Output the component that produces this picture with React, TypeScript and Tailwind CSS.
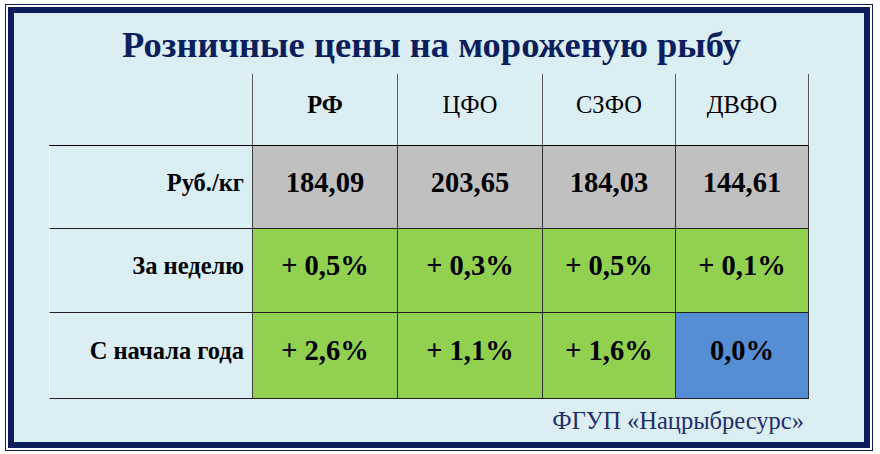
import React from 'react';

const cols = ['РФ', 'ЦФО', 'СЗФО', 'ДВФО'];

const rows = [
  { label: 'Руб./кг', cells: ['184,09', '203,65', '184,03', '144,61'], bg: ['bg-[#c0c0c0]', 'bg-[#c0c0c0]', 'bg-[#c0c0c0]', 'bg-[#c0c0c0]'], h: 'h-[83px]' },
  { label: 'За неделю', cells: ['+ 0,5%', '+ 0,3%', '+ 0,5%', '+ 0,1%'], bg: ['bg-[#92d050]', 'bg-[#92d050]', 'bg-[#92d050]', 'bg-[#92d050]'], h: 'h-[84px]' },
  { label: 'С начала года', cells: ['+ 2,6%', '+ 1,1%', '+ 1,6%', '0,0%'], bg: ['bg-[#92d050]', 'bg-[#92d050]', 'bg-[#92d050]', 'bg-[#558ed5]'], h: 'h-[86px]' },
];

export default function App() {
  return (
    <div className="w-[880px] h-[454px] bg-white pl-[5px] pt-[4px]" style={{ fontFamily: '"Liberation Serif", "Times New Roman", serif' }}>
      <div className="w-[868px] h-[447px] border border-[#0c1c5c] p-[2px] bg-white">
        <div className="w-full h-full border-[6px] border-[#0c1c5c] bg-[#dbeef4] flex flex-col">
          {/* title */}
          <h1 className="h-[61px] flex items-center justify-center pt-[4px] pr-[15px] text-[36.5px] font-bold text-[#0b1f5e] leading-none">
            Розничные цены на мороженую рыбу
          </h1>

          {/* table */}
          <div className="ml-[35px] grid grid-cols-[204px_145px_145px_133px_133px] text-black">
            <div className="h-[72px] border-r border-r-[#595959] border-b border-b-black" />
            {cols.map((c, i) => (
              <div
                key={c}
                className={`h-[72px] flex items-center justify-center pb-[9px] border-r border-r-[#595959] border-b border-b-black text-[24.5px] ${i === 0 ? 'font-bold' : ''}`}
              >
                {c}
              </div>
            ))}

            {rows.map((r) => (
              <React.Fragment key={r.label}>
                <div className={`${r.h} flex items-center justify-end pr-[8px] pb-[8px] border-l border-l-white border-r border-r-[#404040] border-b border-b-[#202020] text-[24.5px] font-bold`}>
                  {r.label}
                </div>
                {r.cells.map((v, i) => (
                  <div
                    key={i}
                    className={`${r.h} ${r.bg[i]} flex items-center justify-center pb-[8px] border-r border-r-[#303030] border-b border-b-[#202020] text-[28.5px] font-bold`}
                  >
                    {v}
                  </div>
                ))}
              </React.Fragment>
            ))}
          </div>

          {/* source */}
          <div className="flex justify-end pr-[60px] pt-[10px] text-[24.5px] text-[#1f2d6e] leading-none">
            ФГУП «Нацрыбресурс»
          </div>
        </div>
      </div>
    </div>
  );
}
